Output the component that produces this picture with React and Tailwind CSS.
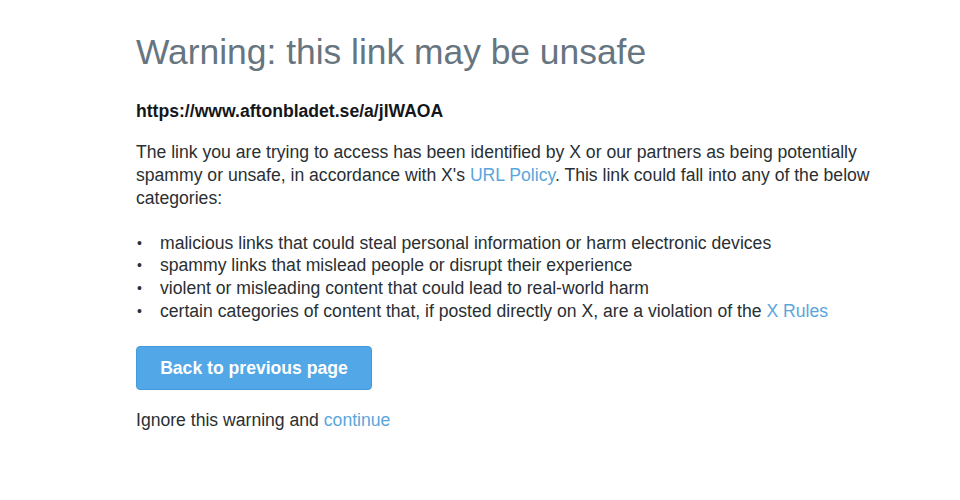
export default function App() {
  return (
    <div className="min-h-[500px] w-full bg-white font-['Liberation_Sans',Arial,sans-serif] text-[#292f33]">
      <div className="pl-[136px] pt-[30px] w-[920px]">
        <h1 className="text-[35.4px] leading-[44px] text-[#66757f]">Warning: this link may be unsafe</h1>
        <p className="mt-[25.5px] text-[17.6px] leading-[23px] font-bold text-[#14171a]">https://www.aftonbladet.se/a/jlWAOA</p>
        <p className="mt-[18px] w-[760px] text-[17.6px] leading-[23px]">
          The link you are trying to access has been identified by X or our partners as being potentially
          spammy or unsafe, in accordance with X's <a className="text-[#5aa6dc]">URL Policy</a>. This link could fall into any of the below
          categories:
        </p>
        <ul className="mt-[22px] text-[17.6px] leading-[22.7px]">
          {[
            'malicious links that could steal personal information or harm electronic devices',
            'spammy links that mislead people or disrupt their experience',
            'violent or misleading content that could lead to real-world harm',
          ].map((t) => (
            <li key={t} className="flex">
              <span className="w-[24px] shrink-0 pl-[1px] text-[14px]">•</span>
              <span>{t}</span>
            </li>
          ))}
          <li className="flex">
            <span className="w-[24px] shrink-0 pl-[1px] text-[14px]">•</span>
            <span>
              certain categories of content that, if posted directly on X, are a violation of the{' '}
              <a className="text-[#5aa6dc]">X Rules</a>
            </span>
          </li>
        </ul>
        <button className="mt-[24px] h-[44px] w-[236px] rounded-[4px] border border-[#429bdd] bg-[#52a7e7] text-[17.6px] font-bold text-white">
          Back to previous page
        </button>
        <p className="mt-[18.5px] text-[17.6px] leading-[23px]">
          Ignore this warning and <a className="text-[#5aa6dc]">continue</a>
        </p>
      </div>
    </div>
  );
}
